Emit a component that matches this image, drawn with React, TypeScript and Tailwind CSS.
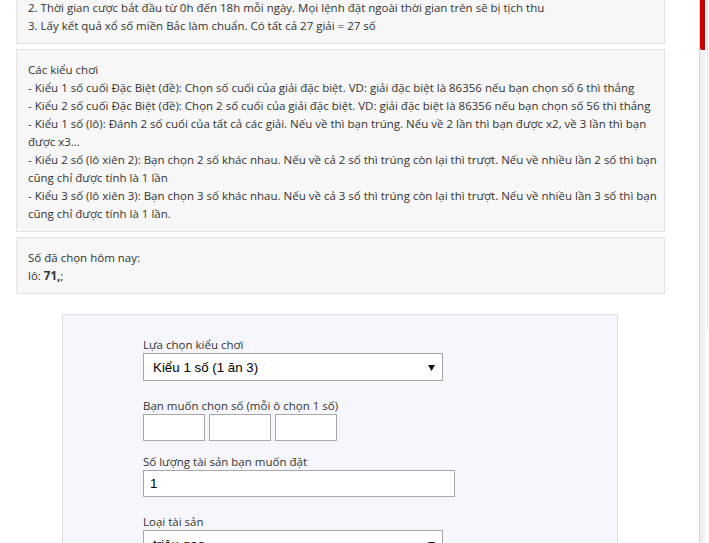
import { ReactNode } from 'react';

const infoFont = { fontFamily: '"Open Sans", "Noto Sans", sans-serif' };

function InfoBox({ children, className = '' }: { children: ReactNode; className?: string }) {
  return (
    <div
      className={`bg-[#f7f7f7] border border-[#e3e3e3] px-[11px] pt-[11px] pb-[8px] text-[11.5px] leading-[18px] text-[#333] ${className}`}
    >
      {children}
    </div>
  );
}

function Line({ children }: { children: ReactNode }) {
  return <div className="whitespace-nowrap h-[18px]">{children}</div>;
}

function FakeSelect({ value }: { value: string }) {
  return (
    <div className="flex items-center justify-between w-[300px] h-[28px] bg-white border border-[#a9a9a9] pl-[9px] pr-[7px] font-['Liberation_Sans',Arial,sans-serif] text-[13.33px] text-black">
      <span>{value}</span>
      <svg width="7" height="6" viewBox="0 0 7 6" className="mt-[1px]">
        <path d="M0 0 H7 L3.5 6 Z" fill="#111" />
      </svg>
    </div>
  );
}

function TextBox({ width, value = '' }: { width: string; value?: string }) {
  return (
    <div
      className={`${width} h-[27px] bg-white border border-[#a9a9a9] pl-[6px] flex items-center font-['Liberation_Sans',Arial,sans-serif] text-[13.33px] text-black`}
    >
      {value}
    </div>
  );
}

export default function App() {
  return (
    <div className="relative w-[709px] h-[543px] overflow-hidden bg-white" style={infoFont}>
      <div className="flex">
        {/* Main column */}
        <div className="w-[699px] pl-[16px] pr-[34px]">
          {/* Rules (top part scrolled out of view) */}
          <div className="bg-[#f7f7f7] border border-t-0 border-[#e3e3e3] px-[11px] pb-[8px] -mt-px text-[11.5px] leading-[18px] text-[#333]">
            <Line>2. Thời gian cược bắt đầu từ 0h đến 18h mỗi ngày. Mọi lệnh đặt ngoài thời gian trên sẽ bị tịch thu</Line>
            <Line>3. Lấy kết quả xổ số miền Bắc làm chuẩn. Có tất cả 27 giải = 27 số</Line>
          </div>

          {/* Game types */}
          <InfoBox className="mt-[5px]">
            <Line>Các kiểu chơi</Line>
            <Line>- Kiểu 1 số cuối Đặc Biệt (đề): Chọn số cuối của giải đặc biệt. VD: giải đặc biệt là 86356 nếu bạn chọn số 6 thì thắng</Line>
            <Line>- Kiểu 2 số cuối Đặc Biệt (đề): Chọn 2 số cuối của giải đặc biệt. VD: giải đặc biệt là 86356 nếu bạn chọn số 56 thì thắng</Line>
            <Line>- Kiểu 1 số (lô): Đánh 2 số cuối của tất cả các giải. Nếu về thì bạn trúng. Nếu về 2 lần thì bạn được x2, về 3 lần thì bạn</Line>
            <Line>được x3...</Line>
            <Line>- Kiểu 2 số (lô xiên 2): Bạn chọn 2 số khác nhau. Nếu về cả 2 số thì trúng còn lại thì trượt. Nếu về nhiều lần 2 số thì bạn</Line>
            <Line>cũng chỉ được tính là 1 lần</Line>
            <Line>- Kiểu 3 số (lô xiên 3): Bạn chọn 3 số khác nhau. Nếu về cả 3 số thì trúng còn lại thì trượt. Nếu về nhiều lần 3 số thì bạn</Line>
            <Line>cũng chỉ được tính là 1 lần.</Line>
          </InfoBox>

          {/* Today's picks */}
          <InfoBox className="mt-[5px]">
            <Line>Số đã chọn hôm nay:</Line>
            <Line>
              lô: <b className="font-bold">71,</b>;
            </Line>
          </InfoBox>

          {/* Bet form */}
          <div className="mt-[20px] ml-[46px] w-[556px] h-[260px] bg-[#f5f7fc] border border-[#dedede] pl-[80px] pt-[21px] text-[11.5px] leading-[17px] text-[#333]">
            <div>
              <div className="h-[17px]">Lựa chọn kiểu chơi</div>
              <FakeSelect value="Kiểu 1 số (1 ăn 3)" />
            </div>
            <div className="mt-[16px]">
              <div className="h-[17px]">Bạn muốn chọn số (mỗi ô chọn 1 số)</div>
              <div className="flex gap-[4px]">
                <TextBox width="w-[62px]" />
                <TextBox width="w-[62px]" />
                <TextBox width="w-[62px]" />
              </div>
            </div>
            <div className="mt-[12px]">
              <div className="h-[17px]">Số lượng tài sản bạn muốn đặt</div>
              <TextBox width="w-[312px]" value="1" />
            </div>
            <div className="mt-[16px]">
              <div className="h-[17px]">Loại tài sản</div>
              <FakeSelect value="triệu gạo" />
            </div>
          </div>
        </div>

        {/* Scroll strip */}
        <div className="w-[6px] h-[543px] flex flex-col border-l border-[#d4d4d4] bg-[#f0f0f0]">
          <div className="h-[50px] bg-[#cc0000] rounded-bl-[2px]" />
        </div>
        <div className="w-[4px] h-[543px] flex">
          <div className="w-[2px]" />
          <div className="w-px h-[330px] bg-[#e5e5e5]" />
        </div>
      </div>
    </div>
  );
}
